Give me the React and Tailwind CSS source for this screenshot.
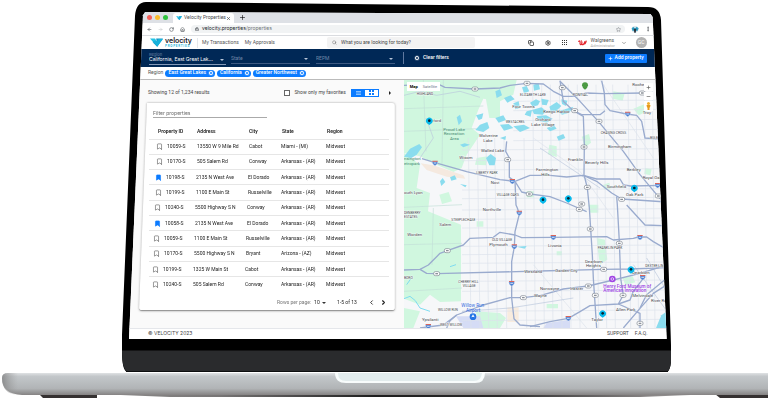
import React, { useState } from 'react';
import { ArrowLeft, ArrowRight, RotateCw, House, Lock, Star, EllipsisVertical, Plus, Minus, X, Search, Settings, ChevronDown, ChevronLeft, ChevronRight, Bookmark, Copy, CircleX } from 'lucide-react';

const ROWS = [
    { id: '10059-S', address: '13550 W 9 Mile Rd', city: 'Cabot', state: 'Miami - (MI)', saved: false },
    { id: '10170-S', address: '505 Salem Rd', city: 'Conway', state: 'Arkansas - (AR)', saved: false },
    { id: '10198-S', address: '2135 N West Ave', city: 'El Dorado', state: 'Arkansas - (AR)', saved: true },
    { id: '10199-S', address: '1100 E Main St', city: 'Russelville', state: 'Arkansas - (AR)', saved: false },
    { id: '10240-S', address: '5500 Highway S N', city: 'Conway', state: 'Arkansas - (AR)', saved: false },
    { id: '10058-S', address: '2135 N West Ave', city: 'El Dorado', state: 'Arkansas - (AR)', saved: true },
    { id: '10059-S', address: '1100 E Main St', city: 'Russelville', state: 'Arkansas - (AR)', saved: false },
    { id: '10170-S', address: '5500 Highway S N', city: 'Bryant', state: 'Arizona - (AZ)', saved: false },
    { id: '10199-S', address: '1325 W Main St', city: 'Cabot', state: 'Arkansas - (AR)', saved: false },
    { id: '10240-S', address: '505 Salem Rd', city: 'Conway', state: 'Arkansas - (AR)', saved: false },
];

// the screen widens towards the bottom, so the rows follow its left edge
const INDENTS = ['pl-[5px]', 'pl-[4px]', 'pl-[3px]', 'pl-[2px]', 'pl-[1px]'];

const HIGHWAYS = [
    'M12 22 L60 20 L110 16 L135 28 L225 33 L300 30 L330 22 L380 16 L430 18 L460 40 L490 55 L520 55 L560 45 L610 47 L730 45',
    'M66 242 L105 254 L200 281 L300 305 L345 310 L390 292 L450 292 L500 297 L550 292 L590 303 L660 303 L670 320 L690 324 L801 322',
    'M345 310 L365 342 L390 348 L450 356 L500 375 L560 401',
    'M320 190 L317 220 L328 240 L328 298 L345 310',
    'M345 310 L348 381 L352 390 L358 408 L345 461 L343 506 L335 551 L335 660 L342 722 L360 741 L420 746',
    'M12 576 L60 574 L85 561 L120 526 L142 518 L190 501 L210 481 L280 478 L300 463 L345 471 L365 479 L460 478 L620 476 L640 486 L700 481 L715 477 L740 477 L760 491 L801 515',
    'M60 574 L80 586 L110 587 L420 579 L610 574 L690 573 L801 569',
    'M60 750 L130 741 L170 711 L250 681 L330 659 L370 659 L420 653 L490 633 L565 624 L640 606 L720 586 L801 561',
    'M390 746 L450 731 L505 721 L540 701 L570 683 L655 678 L690 666 L700 640 L730 601',
    'M480 8 L490 70 L520 98 L550 115 L553 200 L552 290 L562 330 L568 390 L577 531 L580 601 L590 750',
    'M480 10 L540 70 L595 130 L670 220 L720 290 L780 362',
    'M605 8 L613 45 L615 80 L630 98 L680 108 L710 112 L725 130 L735 180 L801 185',
    'M520 98 L545 110 L600 110 L615 98',
    'M552 293 L590 310 L635 345 L665 363 L801 372',
    'M650 355 L652 381 L658 491 L662 601 L670 651 L655 678',
    'M680 381 L735 441 L801 443',
    'M670 750 L720 691 L760 646 L801 620',
    'M655 678 L720 706 L720 750',
    'M720 690 L740 650 L801 600',
    'M140 750 L150 728 L170 711',
];

const STREETS_X = [205, 232, 258, 284, 312, 372, 398, 425, 451, 478, 505, 532, 588, 612, 638, 684, 708, 733, 757];
const STREETS_Y = [70, 98, 128, 158, 188, 216, 248, 276, 336, 362, 396, 424, 450, 505, 530, 556, 610, 640, 700, 728];

const GREENS = [
    'M12 6 H350 L340 50 L300 70 L250 62 L235 95 L215 150 L240 170 L200 230 L185 270 L160 282 L110 260 L60 235 L12 225 Z',
    'M12 225 L60 260 L50 330 L90 345 L84 400 L183 440 V670 L120 672 L90 650 L60 680 L12 662 Z',
    'M250 20 H300 V120 H268 Z', 'M230 240 L262 235 L258 262 L225 260 Z',
    'M590 480 L615 485 L622 545 L600 560 L594 520 Z', 'M12 690 L60 700 L40 750 H12 Z',
    'M225 700 L300 705 L318 720 L300 750 L250 750 Z', 'M440 678 h34 v13 h-34 z',
    'M545 176 l22 -8 l6 26 l-18 14 z', 'M448 200 l22 5 v32 l-26 -8 z', 'M668 600 l30 -5 l8 18 l-30 8 z',
    'M640 40 l34 6 l-6 22 l-30 -6 z', 'M565 380 h30 v24 h-24 z', 'M735 270 l20 4 l-4 18 l-18 -4 z',
    'M230 430 h20 v16 h-20 z', 'M118 350 l28 -8 l10 28 l-30 8 z', 'M700 92 l34 -14 l12 20 l-30 14 z',
    'M380 340 h22 v18 h-22 z', 'M610 320 l18 -6 l4 20 h-20 z', 'M470 520 h16 v12 h-16 z',
];

const LAKES = [
    'M12 236 L30 212 L58 198 L66 208 L50 230 L34 240 Z', 'M258 240 L272 228 L288 240 L284 262 L268 262 Z',
    'M390 74 L408 64 L420 70 L414 82 L398 86 Z', 'M424 62 L446 66 L440 82 L426 80 Z', 'M448 86 L470 72 L484 84 L470 98 L452 98 Z',
    'M474 100 L520 86 L508 104 L486 110 Z', 'M396 96 L424 88 L440 100 L428 110 L402 108 Z', 'M410 114 L438 112 L458 122 L440 134 L414 128 Z',
    'M484 64 L502 68 L498 84 L486 78 Z', 'M286 40 L300 34 L306 52 L290 60 Z', 'M312 60 L332 52 L344 64 L322 74 Z', 'M340 76 L356 70 L360 90 L346 94 Z',
    'M170 118 L180 110 L186 130 L176 142 Z', 'M228 112 L250 106 L246 122 L236 126 Z', 'M240 140 L262 132 L268 150 L250 162 L226 156 Z',
    'M286 120 L310 112 L318 126 L296 134 Z', 'M300 140 L326 138 L340 150 L312 158 Z', 'M340 145 L372 140 L390 150 L360 162 Z',
    'M380 100 L396 96 L392 116 L374 110 Z', 'M400 20 L416 16 L420 34 L402 38 Z', 'M366 28 L380 24 L388 40 L372 46 Z',
    'M180 200 L194 196 L210 200 L190 208 Z', 'M150 298 L164 292 L170 304 L154 308 Z', 'M120 310 L128 300 L136 312 L124 324 Z',
    'M470 176 L490 168 L496 180 L476 188 Z', 'M440 150 L462 142 L470 152 L450 160 Z', 'M300 180 L318 174 L316 186 Z',
    'M784 712 L801 700 V750 H768 Z', 'M350 506 L380 504 L374 512 Z', 'M180 318 L200 322 L196 328 Z',
];

const LABELS = [
    [50, 52, 'HIGHLAND', 10], [100, 132, 'ford', 13], [237, 178, 'Wolverine', 13], [250, 191, 'Lake', 13],
    [243, 221, 'Walled Lake', 13], [178, 242, 'Wixom', 13], [228, 288, 'LIBERTY PARK', 10], [272, 317, 'Novi', 13],
    [290, 354, 'VILLAGE OAKS', 10], [12, 349, 'outh Lyon', 13], [337, 89, 'Four Towns', 13], [360, 55, 'ELIZABETH LAKE', 10],
    [317, 136, 'WESTACRES', 10], [430, 106, 'Keego Harbor', 13], [406, 130, 'Orchard', 13], [394, 144, 'Lake Village', 13],
    [518, 54, 'PONTIAC', 11], [697, 25, 'Rochester', 13], [728, 109, 'Troy', 13], [602, 167, 'CHASING CROSS', 10],
    [624, 209, 'Birmingham', 13], [504, 248, 'Franklin', 13], [555, 258, 'Beverly Hills', 13], [408, 280, 'Farmington', 13],
    [424, 293, 'Hills', 13], [680, 280, 'Berkley', 13], [620, 330, 'Southfield', 13], [678, 354, 'Oak Park', 13],
    [728, 304, 'Royal Oak', 13], [750, 183, 'BIG BEAVER', 10], [12, 409, 'DENBERRY', 10], [12, 421, 'ESTATES', 10],
    [22, 473, 'Worden', 13], [118, 443, 'Salem', 13], [154, 430, 'STEEPLECHASE', 10], [248, 399, 'Northville', 13],
    [276, 488, 'OLD VILLAGE', 10], [268, 503, 'Plymouth', 13], [12, 602, 'BORO', 10], [373, 584, 'Westland', 13],
    [175, 616, 'CHERRY HILL', 10], [188, 628, 'VILLAGE', 10], [114, 699, 'WILLOW RUN', 10], [66, 728, 'Ypsilanti', 13],
    [120, 744, 'WEST WILLOW', 10], [444, 508, 'Livonia', 13], [593, 513, 'FRANKLIN PARK', 10], [466, 581, 'Garden City', 13],
    [555, 555, 'Dearborn', 13], [558, 568, 'Heights', 13], [696, 587, 'Dearborn', 13], [736, 568, 'DEXTER-LINWOOD', 10],
    [420, 636, 'Norwayne', 13], [510, 635, 'Inkster', 13], [402, 657, 'Wayne', 13], [697, 656, 'Melvindale', 13],
    [648, 699, 'Allen Park', 13], [574, 728, 'Taylor', 13], [753, 672, 'River Rouge', 13],
];

const SHIELDS = [
    [225, 33], [381, 16], [323, 245], [388, 348], [487, 29], [524, 98], [597, 130], [552, 207], [562, 328],
    [545, 378], [665, 364], [727, 45], [142, 518], [110, 587], [370, 659], [571, 453], [538, 394], [658, 496],
    [611, 574], [565, 624], [586, 652], [669, 652], [720, 736], [775, 354],
];
const INTERSTATES = [[105, 255], [337, 310], [683, 108], [773, 322], [358, 405], [343, 506], [335, 616], [85, 745], [460, 478], [720, 478], [728, 598], [505, 721]];
const PINS = [[88, 128], [703, 330], [429, 365], [505, 361], [693, 574], [608, 706]];

function MapCanvas() {
    return (
        <svg className="absolute inset-0 h-full w-full" viewBox="12 6 789 744" preserveAspectRatio="xMinYMin slice" fontFamily="Roboto, sans-serif">
            <rect x="12" y="6" width="900" height="900" fill="#f6f7f9" />
            {GREENS.map(d => <path key={d} d={d} fill="#d0f7df" />)}
            <path d="M62 256 L100 262 L190 292 L196 302 L140 296 L80 276 Z" fill="#f5e9df" />
            <path d="M322 688 h34 v44 h-34 z" fill="#f8ecdf" />
            <path d="M168 715 H240 L250 750 H190 Z M440 735 L510 725 V750 H430 Z" fill="#d5dcf5" />
            <g fill="none" stroke="#dde3ec" strokeWidth="2">
                {STREETS_X.map((x, i) => <path key={x} d={`M${x} ${i < 6 ? 180 : 20} L${x + 8} 750`} />)}
                {STREETS_Y.map((y, i) => <path key={y} d={`M${i < 5 ? 340 : 186} ${y} L801 ${y - 4}`} />)}
                <path d="M12 92 L250 84 M12 160 L230 152 M70 6 L78 220 M130 6 L126 260 M12 388 L186 380 M12 500 L186 496 M100 390 L96 560 M12 640 L186 630" stroke="#c3e0d8" />
                <path d="M400 180 L540 280 L640 420 M600 6 L760 240 M400 560 L560 750" />
            </g>
            <g fill="none" stroke="#b9c7dd" strokeWidth="2">
                <path d="M12 52 L60 40 L110 52 L180 40 L240 58 M60 240 L100 180 L78 120 M420 210 L480 250 L600 330 M186 700 L330 690 L520 660 M700 560 L801 700 M740 540 L801 640" />
            </g>
            {LAKES.map(d => <path key={d} d={d} fill="#8adcee" />)}
            <path d="M12 662 L30 655 L46 668 L60 690 L90 700 M20 620 L34 600 M150 566 L168 560" fill="none" stroke="#7fdcf0" strokeWidth="3" />
            <g fill="none" stroke="#9aabce" strokeWidth="4" strokeLinejoin="round">
                {HIGHWAYS.map(d => <path key={d} d={d} />)}
            </g>
            {SHIELDS.map(([x, y]) => (
                <g key={`${x}-${y}`}>
                    <rect x={x - 9} y={y - 6} width="18" height="12" rx="5" fill="#fff" stroke="#7d8590" strokeWidth="2" />
                    <path d={`M${x - 4} ${y} h8`} stroke="#8b9098" strokeWidth="4" />
                </g>
            ))}
            {INTERSTATES.map(([x, y]) => (
                <g key={`${x}-${y}`}>
                    <path d={`M${x - 8} ${y - 5} h16 q2 9 -8 13 q-10 -4 -8 -13 z`} fill="#4b7fd0" stroke="#fff" />
                    <path d={`M${x - 8} ${y - 7} h16 v3 h-16 z`} fill="#d9655b" />
                    <path d={`M${x - 4} ${y} h8`} stroke="#cfdff7" strokeWidth="3" />
                </g>
            ))}
            <g fill="#3c4248" stroke="#fff" strokeWidth="2" paintOrder="stroke">
                {LABELS.map(([x, y, text, size]) => <text key={text + y} x={x} y={y} fontSize={size}>{text}</text>)}
            </g>
            <g fill="#478a73" fontSize="13">
                <text x="130" y="159">Proud Lake</text>
                <text x="131" y="172">Recreation</text>
                <text x="150" y="185">Area</text>
                <text x="12" y="247">nsington</text>
                <text x="12" y="260">etropark</text>
            </g>
            <g fill="#356be0" fontSize="14">
                <text x="184" y="687">Willow Run</text>
                <text x="198" y="702">Airport</text>
                <circle cx="219" cy="716" r="10" fill="#2474e5" />
                <path d="M219 709 l5 9 l-5 -2 l-5 2 z" fill="#fff" />
            </g>
            <g fill="#a044e4" fontSize="14" fontWeight="500">
                <circle cx="637" cy="603" r="10" />
                <circle cx="637" cy="603" r="4" fill="none" stroke="#fff" strokeWidth="2" />
                <text x="610" y="629">Henry Ford Museum of</text>
                <text x="610" y="643">American Innovation</text>
            </g>
            <path d="M549 30 l-3 -8 a9 9 0 1 1 18 0 l-3 8 l-6 5 z" fill="#4c9a44" />
            {PINS.map(([x, y]) => (
                <g key={`${x}-${y}`}>
                    <path d={`M${x} ${y + 13} l-8 -6 a10 10 0 1 1 16 0 z`} fill="#06b9ec" />
                    <circle cx={x} cy={y} r="4" fill="#08222e" />
                </g>
            ))}
        </svg>
    );
}

function PropertyMap() {
    return (
        <section className="relative overflow-hidden">
            <MapCanvas />
            <div className="absolute left-[3px] top-[2px] flex h-[9px] items-center gap-[5px] bg-white px-[3px] text-[4px]">
                <button className="font-bold text-black">Map</button>
                <button className="text-gray-500">Satellite</button>
            </div>
            <div className="absolute right-[14px] top-[3px] flex w-[9px] flex-col gap-px">
                <button aria-label="Zoom in" className="flex h-[8px] items-center justify-center bg-white"><Plus size={5} strokeWidth={3} color="#555" /></button>
                <button aria-label="Zoom out" className="flex h-[8px] items-center justify-center bg-white"><Minus size={5} strokeWidth={3} color="#555" /></button>
                <button aria-label="Street view" className="flex h-[10px] items-center justify-center bg-white">
                    <svg width="5" height="8" viewBox="0 0 10 16"><circle cx="5" cy="3" r="3" fill="#f2ae2e" /><path d="M1 6 h8 l-1 5 h-1 v5 h-4 v-5 h-1 z" fill="#e59a1c" /></svg>
                </button>
            </div>
        </section>
    );
}

function VelocityMark({ className }) {
    return (
        <svg className={className} viewBox="0 0 36 24">
            <path d="M0 1 H14 L18 8 H6 Z" fill="#22c3e6" />
            <path d="M17 1 H36 L20 24 L7 11 H19 Z" fill="#1598c8" />
            <path d="M6 8 H20 L24 2 H36 L20 24 Z" fill="#17b2dc" />
        </svg>
    );
}

function FilterSelect({ label, value, active, className }) {
    return (
        <label className={`flex items-center border-b ${active ? 'border-[#8499b8] text-white' : 'border-[#3d5a83] text-[#7187a8]'} ${className}`}>
            <select aria-label={label} className="min-w-0 flex-1 appearance-none bg-transparent outline-none">
                <option>{value}</option>
            </select>
            <svg className="mr-[2px] h-[2px] w-[4px]" viewBox="0 0 4 2"><path d="M0 0 H4 L2 2 Z" fill="#b8c5d8" /></svg>
        </label>
    );
}

function BrowserChrome() {
    return (
        <>
            <div className="flex h-[11px] items-end bg-[#dee1e6] pl-[18px]">
                <div className="flex h-full items-center gap-[3px]">
                    <span className="size-[5px] rounded-full bg-[#f4605a]"></span>
                    <span className="size-[5px] rounded-full bg-[#f9bd2e]"></span>
                    <span className="size-[5px] rounded-full bg-[#2fc440]"></span>
                </div>
                <div className="ml-[5px] flex h-[10px] w-[61px] items-center rounded-t-[3px] bg-white pl-[3px] pr-[3px] text-[#45494d]">
                    <VelocityMark className="mr-[2px] h-[4px] w-[6px]" />
                    <span className="flex-1 whitespace-nowrap text-[5px]">Velocity Properties</span>
                    <button aria-label="Close tab"><X size={5} strokeWidth={3} /></button>
                </div>
                <button aria-label="New tab" className="mb-[2px] ml-[5px]"><Plus size={7} strokeWidth={2} /></button>
            </div>
            <div className="flex h-[12px] items-center gap-[6px] bg-white pl-[18px] pr-[16px] text-[#5f6368]">
                <ArrowLeft size={5} strokeWidth={3} />
                <ArrowRight size={5} strokeWidth={2} color="#b5b8bb" />
                <RotateCw size={5} strokeWidth={3} />
                <House size={5} strokeWidth={3} />
                <div className="flex h-[8px] flex-1 items-center rounded-full bg-[#f1f3f4] px-[4px]">
                    <Lock size={4} strokeWidth={4} />
                    <a href="#" className="ml-[3px] flex-1 font-['Inter',sans-serif] text-[5px] text-[#6f7478]"><span className="text-[#202124]">velocity.properties</span>/properties</a>
                    <Star size={5} strokeWidth={2} />
                </div>
                <svg width="8" height="7" viewBox="0 0 24 21"><circle cx="12" cy="10" r="10" fill="#d7e4ea" /><path d="M2 6 L8 3 L12 8 L17 2 L23 7 L20 14 H4 Z" fill="#2e9fc5" /><path d="M8 8 H16 L14 20 H10 Z" fill="#29323c" /></svg>
                <EllipsisVertical size={6} strokeWidth={3} />
            </div>
        </>
    );
}

function AppHeader() {
    return (
        <header className="flex h-[14px] items-center border-t border-[#dadce0] bg-white pl-[21px] pr-[20px] text-[5px] text-[#555]">
            <VelocityMark className="h-[9px] w-[13px]" />
            <div className="ml-[2px] flex w-[28px] flex-col">
                <span className="font-['Inter',sans-serif] text-[7px] font-semibold leading-[7px] text-[#1f2328]">velocity</span>
                <span className="whitespace-nowrap text-[3px] font-semibold leading-[4px] text-[#19b5dc]">P R O P E R T I E S</span>
            </div>
            <nav className="ml-[4px] flex h-[10px] items-center gap-[6px] whitespace-nowrap border-l border-gray-200 pl-[4px]">
                <a href="#">My Transactions</a>
                <a href="#">My Approvals</a>
            </nav>
            <label className="ml-auto flex h-[11px] w-[148px] items-center gap-[4px] rounded-[2px] bg-[#f3f3f3] pl-[5px]">
                <Search size={5} strokeWidth={2} />
                <input aria-label="Search" placeholder="What you are looking for today?" className="w-full bg-transparent outline-none placeholder:text-[#444]" />
            </label>
            <div className="ml-auto flex items-center gap-[11px] text-[#333]">
                <button aria-label="Documents"><Copy size={6} strokeWidth={3} /></button>
                <button aria-label="Settings"><Settings size={6} strokeWidth={3} /></button>
                <button aria-label="Apps">
                    <svg width="6" height="6" viewBox="0 0 6 6"><path d="M0 0h1v1H0z M2 0h1v1H2z M4 0h1v1H4z M0 2h1v1H0z M2 2h1v1H2z M4 2h1v1H4z M0 4h1v1H0z M2 4h1v1H2z M4 4h1v1H4z" fill="#333" /></svg>
                </button>
            </div>
            <svg className="ml-[10px]" width="9" height="6" viewBox="0 0 27 18"><path d="M1 5 C5 0 7 4 6 11 C8 18 12 12 12 5 C10 14 14 17 18 11 L21 4 M18 11 C20 14 24 8 25 2 M9 4 L12 2" fill="none" stroke="#e3262e" strokeWidth="3.5" /></svg>
            <div className="ml-[4px] flex w-[26px] flex-col">
                <span className="text-[5px] leading-[5px]">Walgreens</span>
                <span className="text-[4px] leading-[5px] text-[#aaa]">Administrator</span>
            </div>
            <ChevronDown className="ml-[4px]" size={6} strokeWidth={2} />
            <span className="ml-[9px] flex size-[11px] items-center justify-center rounded-full bg-[#b3b3b3] text-white">GC</span>
        </header>
    );
}

function FilterBar() {
    return (
        <div className="flex h-[18px] items-center bg-[#002856] pl-[20px] pr-[20px] text-[5px] text-white">
            <div className="flex w-[77px] flex-col font-['Inter',sans-serif]">
                <span className="text-[4px] leading-[5px] text-[#6f87a9]">Region</span>
                <FilterSelect label="Region" value="California, East Great Lak..." active className="h-[8px]" />
            </div>
            <FilterSelect label="State" value="State" className="ml-[5px] mt-[3px] h-[9px] w-[79px]" />
            <FilterSelect label="REPM" value="REPM" className="ml-[6px] mt-[3px] h-[9px] w-[79px]" />
            <button className="ml-[8px] flex h-[12px] items-center gap-[3px] whitespace-nowrap border-l border-[#6079a0] pl-[10px] font-medium">
                <CircleX size={6} fill="#fff" color="#002856" strokeWidth={3} /> Clear filters
            </button>
            <button className="ml-auto flex h-[9px] w-[42px] items-center justify-center gap-[2px] whitespace-nowrap rounded-[1px] bg-[#0b7bff] font-medium">
                <Plus size={5} strokeWidth={3} /> Add property
            </button>
        </div>
    );
}

function RegionChips() {
    const [chips, setChips] = useState(['East Great Lakes', 'California', 'Greater Northwest']);

    return (
        <div className="flex h-[13px] items-center gap-[2px] border-b border-[#bbb] bg-white pl-[19px] text-[5px]">
            <span className="text-[#555]">Region</span>
            {chips.map(chip => (
                <span key={chip} className="flex h-[7px] items-center gap-[2px] whitespace-nowrap rounded-full bg-[#0b7bff] pl-[3px] pr-px font-medium text-white">
                    {chip}
                    <button aria-label={`Remove ${chip}`} onClick={() => setChips(chips.filter(c => c !== chip))}>
                        <CircleX size={6} fill="#fff" color="#0b7bff" strokeWidth={3} />
                    </button>
                </span>
            ))}
        </div>
    );
}

function PropertyTable() {
    return (
        <div className="drop-shadow-[0_0_1px_rgba(0,0,0,0.35)]">
            <div className="flex h-[208px] flex-col rounded-[3px] border-b border-[#999] bg-white pl-[10px] pr-[6px] [clip-path:polygon(8px_0,100%_0,100%_100%,0_100%)]">
                <input aria-label="Filter properties" placeholder="Filter properties" className="ml-[4px] mt-[5px] h-[10px] w-[114px] border-b border-[#aaa] font-['Inter',sans-serif] text-[5px] outline-none placeholder:text-[#666]" />
                <table className="mt-[6px] h-[168px] w-full table-fixed border-collapse text-left text-[5px] leading-[5px] text-[#222]">
                    <colgroup>
                        <col className="w-[43px]" />
                        <col className="w-[52px]" />
                        <col className="w-[35px]" />
                        <col className="w-[46px]" />
                        <col />
                    </colgroup>
                    <thead>
                        <tr className="h-[15px]">
                            <th className="pl-[9px] font-semibold">Property ID</th>
                            <th className="pl-[5px] font-semibold">Address</th>
                            <th className="pl-[5px] font-semibold">City</th>
                            <th className="pl-[3px] font-semibold">State</th>
                            <th className="pl-[2px] font-semibold">Region</th>
                        </tr>
                    </thead>
                    <tbody>
                        {ROWS.map((row, i) => {
                            const indent = INDENTS[Math.floor(i / 2)];
                            return (
                                <tr key={i} className="h-[15px] border-t border-[#e6e6e6]">
                                    <td className={indent}>
                                        <div className="flex items-center gap-[4px] pl-[2px]">
                                            <button aria-label={`Save ${row.id}`}>
                                                <Bookmark size={7} strokeWidth={2} color={row.saved ? '#0b7bff' : '#555'} fill={row.saved ? '#0b7bff' : 'none'} />
                                            </button>
                                            {row.id}
                                        </div>
                                    </td>
                                    <td className={`whitespace-nowrap ${indent}`}>{row.address}</td>
                                    <td className={indent}>{row.city}</td>
                                    <td className="whitespace-nowrap pl-[2px]">{row.state}</td>
                                    <td className="pl-[1px]">Midwest</td>
                                </tr>
                            );
                        })}
                    </tbody>
                </table>
                <div className="mt-[7px] flex items-center justify-end text-[5px] leading-[7px] text-[#222]">
                    <label htmlFor="rows" className="mr-[3px] text-[#777]">Rows per page:</label>
                    <select id="rows" className="w-[7px] appearance-none bg-transparent"><option>10</option></select>
                    <svg className="ml-px mr-[11px] h-[2px] w-[4px]" viewBox="0 0 4 2"><path d="M0 0 H4 L2 2 Z" fill="#333" /></svg>
                    <span className="mr-[11px]">1-5 of 13</span>
                    <button aria-label="Previous page" className="mr-[5px]"><ChevronLeft size={7} strokeWidth={3} /></button>
                    <button aria-label="Next page" className="mr-[2px]"><ChevronRight size={7} strokeWidth={4} /></button>
                </div>
            </div>
        </div>
    );
}

function ResultsPanel() {
    return (
        <section className="flex flex-col bg-[#fafafa] pl-[10px] pr-[9px]">
            <div className="flex h-[23px] items-center pl-[9px] pr-[4px] pt-[2px] text-[5px] text-[#444]">
                <span>Showing 12 of 1,234 results</span>
                <input id="favorites" type="checkbox" className="ml-auto size-[6px] appearance-none border border-[#666] bg-white" />
                <label htmlFor="favorites" className="ml-[4px]">Show only my favorites</label>
                <div className="ml-[5px] flex h-[8px] w-[28px] border border-[#0b7bff]">
                    <button aria-label="List view" className="flex flex-1 items-center justify-center bg-[#0b7bff]">
                        <svg width="5" height="4" viewBox="0 0 10 8"><path d="M0 1 H10 M0 4 H10 M0 7 H10" stroke="#b9dcff" strokeWidth="1.4" /></svg>
                    </button>
                    <button aria-label="Grid view" className="flex flex-1 items-center justify-center bg-white">
                        <svg width="5" height="5" viewBox="0 0 10 10"><path d="M0 0h4v4H0z M6 0h4v4H6z M0 6h4v4H0z M6 6h4v4H6z" fill="#0b7bff" /></svg>
                    </button>
                </div>
                <button aria-label="Collapse list" className="ml-[10px]">
                    <svg width="2" height="4" viewBox="0 0 2 4"><path d="M0 0 L2 2 L0 4 Z" fill="#222" /></svg>
                </button>
            </div>
            <PropertyTable />
        </section>
    );
}

function Laptop() {
    return (
        <svg className="absolute inset-0 h-full w-full" viewBox="0 0 768 400" preserveAspectRatio="none">
            <defs>
                <linearGradient id="base" x1="0" y1="0" x2="0" y2="1">
                    <stop offset="0" stopColor="#dfe2e4" />
                    <stop offset="0.15" stopColor="#c3c7ca" />
                    <stop offset="0.7" stopColor="#b1b4b6" />
                    <stop offset="1" stopColor="#858383" />
                </linearGradient>
                <linearGradient id="shade" x1="0" y1="0" x2="1" y2="0">
                    <stop offset="0" stopColor="#8e8c8c" />
                    <stop offset="0.2" stopColor="#777575" />
                    <stop offset="0.45" stopColor="#1e1e1e" />
                    <stop offset="0.65" stopColor="#2a2a2a" />
                    <stop offset="0.9" stopColor="#8a8787" />
                    <stop offset="1" stopColor="#aaa" />
                </linearGradient>
                <linearGradient id="edge" x1="0" y1="0" x2="1" y2="0">
                    <stop offset="0" stopColor="#777" stopOpacity="0.7" />
                    <stop offset="1" stopColor="#999" stopOpacity="0" />
                </linearGradient>
            </defs>
            <path d="M146 2 L648 7 Q660 7 661 20 L671 345 L671 362 Q670 371 667 372 L127 372 Q122 370 122 352 L122 335 L135 16 Q136 2 146 2 Z" fill="#000" />
            <path d="M122 350.5 H671 V362 Q670 370 667 372 H127 Q122 368 122 352 Z" fill="#2a2b2d" />
            <path d="M126 371.5 H668" stroke="#0d0e0f" />
            <path d="M39 394 H97 V398 H43 Z M715 394 H768 V398 H720 Z" fill="#353131" />
            <path d="M96 394 H716 L640 397 H170 Z" fill="url(#shade)" />
            <path d="M8 373 H768 V395 H22 Q2 394 2 378 Q2 373 8 373 Z" fill="url(#base)" />
            <path d="M8 373 H18 V395 Q2 394 2 378 Q2 373 8 373 Z" fill="url(#edge)" />
            <path d="M335 373 H485 Q485 383 475 383 H346 Q335 383 335 373 Z" fill="#f8fcfc" />
            <path d="M338 373 H482 Q481 381 474 381 H346 Q338 381 338 373 Z" fill="#e2eced" />
        </svg>
    );
}

export default function App() {
    return (
        <div className="relative flex min-h-screen flex-col bg-white pb-[61px] pt-[12px] font-['Roboto',sans-serif]">
            <Laptop />
            <div className="relative ml-[16.8%] mr-[13.2%] flex flex-1 flex-col bg-white [clip-path:polygon(3%_0,97%_0.6%,97.4%_1.5%,100%_100%,0_100%,2.6%_1%)]">
                <BrowserChrome />
                <AppHeader />
                <FilterBar />
                <RegionChips />
                <main className="grid flex-1 grid-cols-[275fr_263fr]">
                    <ResultsPanel />
                    <PropertyMap />
                </main>
                <footer className="flex h-[11px] items-center border-t border-gray-200 bg-white pl-[19px] pr-[19px] text-[5px] text-[#444]">
                    <span className="font-['Inter',sans-serif]">© VELOCITY 2023</span>
                    <a href="#" className="ml-auto">SUPPORT</a>
                    <a href="#" className="ml-[6px]">F.A.Q.</a>
                </footer>
            </div>
        </div>
    );
}
